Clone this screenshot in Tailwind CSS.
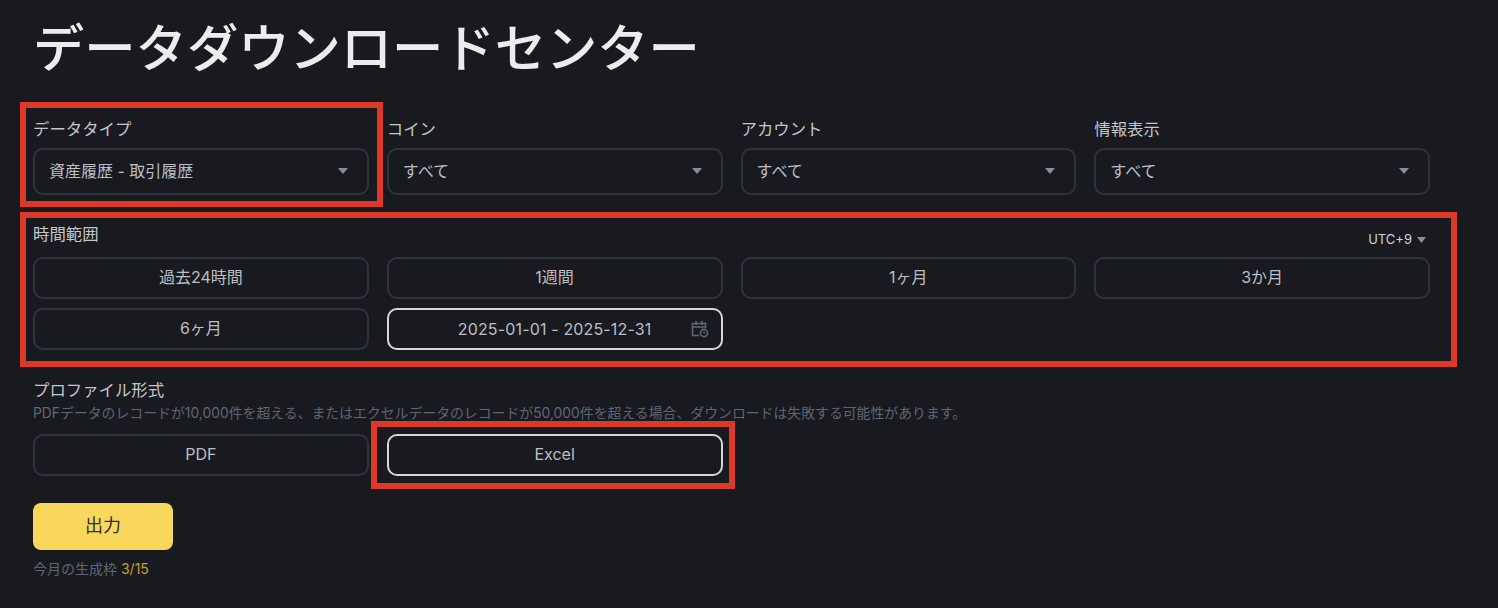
<!DOCTYPE html>
<html lang="ja">

<head>
  <meta charset="UTF-8" />
  <meta name="viewport" content="width=device-width, initial-scale=1.0" />
  <title>データダウンロードセンター</title>
  <script src="https://cdn.jsdelivr.net/npm/@tailwindcss/browser@4"></script>
</head>

<body class="relative bg-[#181a20] h-[608px] w-[1498px] overflow-hidden font-['Inter','Noto_Sans_CJK_JP',sans-serif] text-[#eaecef]">

  <main class="w-[1397px] ml-[33px] pt-[18px]">
    <h1 class="text-[51.3px] leading-[60px] font-medium h-[60px] whitespace-nowrap">データダウンロードセンター</h1>

    <!-- filters -->
    <div class="grid grid-cols-4 gap-x-[18px] mt-[40px]">
      <div>
        <label class="block text-[16.4px] leading-[22px] text-[#c4c6ca]">データタイプ</label>
        <button class="mt-[8px] w-full h-[47px] px-[14px] pb-[2px] flex items-center justify-between rounded-[10px] border-2 border-[#2d333d] text-[16px] text-[#bcbfc4]">
          <span>資産履歴 - 取引履歴</span>
          <svg class="w-[12px] h-[8px] mr-[4px]" viewBox="0 0 12 8"><path d="M1 1h10L6 7z" fill="#848e9c" /></svg>
        </button>
      </div>
      <div>
        <label class="block text-[16.4px] leading-[22px] text-[#c4c6ca]">コイン</label>
        <button class="mt-[8px] w-full h-[47px] px-[14px] pb-[2px] flex items-center justify-between rounded-[10px] border-2 border-[#2d333d] text-[16px] text-[#bcbfc4]">
          <span>すべて</span>
          <svg class="w-[12px] h-[8px] mr-[4px]" viewBox="0 0 12 8"><path d="M1 1h10L6 7z" fill="#848e9c" /></svg>
        </button>
      </div>
      <div>
        <label class="block text-[16.4px] leading-[22px] text-[#c4c6ca]">アカウント</label>
        <button class="mt-[8px] w-full h-[47px] px-[14px] pb-[2px] flex items-center justify-between rounded-[10px] border-2 border-[#2d333d] text-[16px] text-[#bcbfc4]">
          <span>すべて</span>
          <svg class="w-[12px] h-[8px] mr-[4px]" viewBox="0 0 12 8"><path d="M1 1h10L6 7z" fill="#848e9c" /></svg>
        </button>
      </div>
      <div>
        <label class="block text-[16.4px] leading-[22px] text-[#c4c6ca]">情報表示</label>
        <button class="mt-[8px] w-full h-[47px] px-[14px] pb-[2px] flex items-center justify-between rounded-[10px] border-2 border-[#2d333d] text-[16px] text-[#bcbfc4]">
          <span>すべて</span>
          <svg class="w-[12px] h-[8px] mr-[4px]" viewBox="0 0 12 8"><path d="M1 1h10L6 7z" fill="#848e9c" /></svg>
        </button>
      </div>
    </div>

    <!-- time range -->
    <div class="flex justify-between items-center mt-[28px] h-[22px]">
      <span class="text-[16.4px] leading-[22px] text-[#c4c6ca]">時間範囲</span>
      <span class="flex items-center gap-[5px] text-[13px] text-[#d0d4da] mt-[12px] mr-[4px]">UTC+9
        <svg class="w-[9px] h-[6px]" viewBox="0 0 9 6"><path d="M0 0h9L4.5 6z" fill="#848e9c" /></svg>
      </span>
    </div>
    <div class="grid grid-cols-4 gap-x-[18px] gap-y-[9px] mt-[12px] text-[16px] text-[#bcbfc4]">
      <button class="h-[42px] pb-[2px] rounded-[10px] border-2 border-[#2d333d]">過去24時間</button>
      <button class="h-[42px] pb-[2px] rounded-[10px] border-2 border-[#2d333d]">1週間</button>
      <button class="h-[42px] pb-[2px] rounded-[10px] border-2 border-[#2d333d]">1ヶ月</button>
      <button class="h-[42px] pb-[2px] rounded-[10px] border-2 border-[#2d333d]">3か月</button>
      <button class="h-[42px] pb-[2px] rounded-[10px] border-2 border-[#2d333d]">6ヶ月</button>
      <button class="relative h-[42px] rounded-[10px] border-2 border-[#d5d7da] tracking-[0.15px]">
        2025-01-01 - 2025-12-31
        <svg class="absolute right-[11px] top-[9px] w-[20px] h-[20px]" viewBox="0 0 20 20" fill="none" stroke="#5e6673" stroke-width="1.6">
          <path d="M9 16.5H2.5v-12h13V9" />
          <path d="M2.5 8h13M6 2v4M12 2v4" />
          <circle cx="14" cy="14" r="3.6" />
          <path d="M14 12.3V14h1.5" stroke-width="1.2" />
        </svg>
      </button>
    </div>

    <!-- profile format -->
    <div class="mt-[29px] text-[16.4px] leading-[22px] text-[#c4c6ca]">プロファイル形式</div>
    <p class="mt-[3px] text-[13.87px] leading-[18px] text-[#5e6673] whitespace-nowrap">PDFデータのレコードが10,000件を超える、またはエクセルデータのレコードが50,000件を超える場合、ダウンロードは失敗する可能性があります。</p>
    <div class="grid grid-cols-4 gap-x-[18px] mt-[12px] text-[16px] text-[#bcbfc4]">
      <button class="h-[42px] pb-[2px] rounded-[10px] border-2 border-[#2d333d]">PDF</button>
      <button class="h-[42px] pb-[2px] rounded-[10px] border-2 border-[#d5d7da]">Excel</button>
    </div>

    <button class="block mt-[27px] w-[140px] h-[47px] pb-[2px] rounded-[8px] bg-[#f8d75a] text-[#2b2f36] text-[18px]">出力</button>
    <p class="mt-[10px] text-[14px] leading-[18px] text-[#5e6673]">今月の生成枠 <span class="text-[#c99f2b]">3/15</span></p>
  </main>

  <!-- red annotation boxes -->
  <div class="absolute left-[20px] top-[102px] w-[363px] h-[105px] border-[6px] border-[#dc3a26]"></div>
  <div class="absolute left-[20px] top-[212px] w-[1437px] h-[155px] border-[6px] border-[#dc3a26]"></div>
  <div class="absolute left-[371px] top-[421px] w-[364px] h-[68px] border-[6px] border-[#dc3a26]"></div>

</body>

</html>
